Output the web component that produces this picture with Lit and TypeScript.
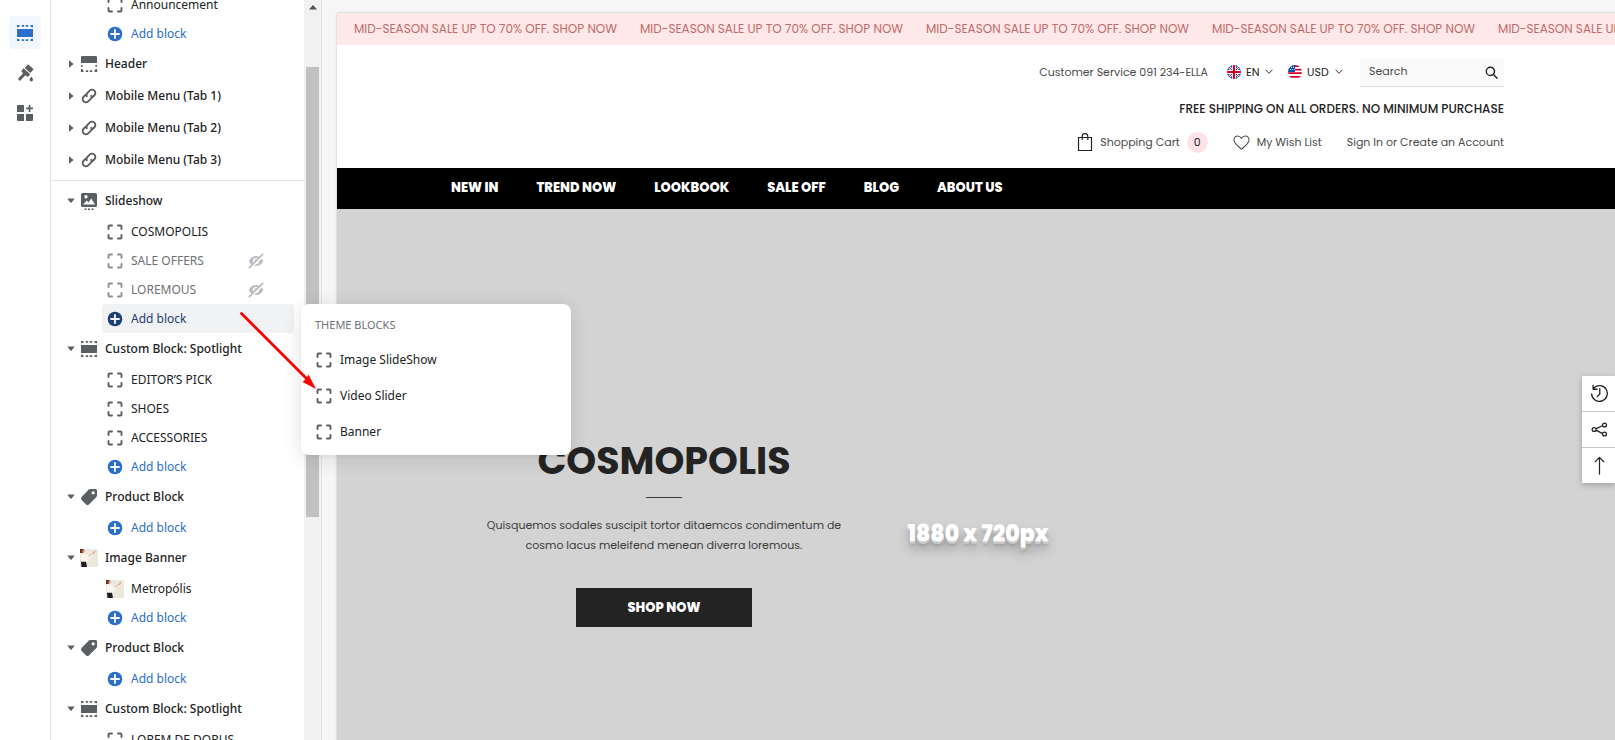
import { LitElement, html, css, svg, nothing, type TemplateResult } from "lit";
import { customElement } from "lit/decorators.js";
import { classMap } from "lit/directives/class-map.js";

const icon = (body: unknown, size = 20, box = "0 0 20 20") =>
  html`<svg class="icon" width=${size} height=${size} viewBox=${box} fill="currentColor" aria-hidden="true">${body}</svg>`;

const stroke = (d: string, size = 20, width = 1, box = "0 0 20 20") =>
  html`<svg class="icon" width=${size} height=${size} viewBox=${box} fill="none" stroke="currentColor" stroke-width=${width} stroke-linecap="round" stroke-linejoin="round" aria-hidden="true"><path d=${d} /></svg>`;

const icons: Record<string, () => TemplateResult> = {
  section: () => icon(svg`<path d="M2 6h16v8H2z"/><path d="M4.500 2.800H2.800V4.300M6.800 2.800h2.400M10.800 2.800h2.400M15.500 2.800h1.700V4.300M4.500 17.200H2.800V15.700M6.800 17.200h2.400M10.800 17.200h2.400M15.500 17.200h1.700V15.700" fill="none" stroke="currentColor" stroke-width="1.700"/>`),
  header: () => icon(svg`<path d="M3 2h14a1 1 0 0 1 1 1v6H2V3a1 1 0 0 1 1-1z"/><path d="M2.800 11v1.800M2.800 15v2.200h1.700M6.800 17.200h2.400M10.800 17.200h2.400M15.500 17.200h1.700V15M17.200 12.800V11" fill="none" stroke="currentColor" stroke-width="1.700"/>`),
  link: () => icon(svg`<g transform="rotate(-45 10 10)" fill="none" stroke="currentColor" stroke-width="1.900" stroke-linecap="round"><path d="M8.500 6.700H5.700a3.300 3.300 0 0 0 0 6.600h3.500a3.300 3.300 0 0 0 2.600-1.900"/><path d="M11.500 13.300h2.800a3.300 3.300 0 0 0 0-6.600h-3.500a3.300 3.300 0 0 0-2.600 1.900"/></g>`),
  slideshow: () => icon(svg`<path fill-rule="evenodd" d="M3.500 2h13A1.500 1.500 0 0 1 18 3.500v11a1.500 1.500 0 0 1-1.500 1.500h-13A1.500 1.500 0 0 1 2 14.500v-11A1.500 1.500 0 0 1 3.500 2zM4 13.500h12l-3.800-6-2.700 4-1.700-2zM7 4a1.700 1.700 0 1 0 .01 0z"/><path d="M5.500 17.500h2v1.500h-2zM9 17.500h2v1.500H9zM12.500 17.500h2v1.500h-2z"/>`),
  tag: () => icon(svg`<path fill-rule="evenodd" d="M11.200 2H16.500A1.500 1.500 0 0 1 18 3.500V8.600a2 2 0 0 1-.6 1.400l-7.500 7.400a2 2 0 0 1-2.800 0L2.600 12.900a2 2 0 0 1 0-2.800l7.200-7.500A2 2 0 0 1 11.200 2zM14.200 4.300a1.600 1.600 0 1 0 .01 0z"/>`),
  block: () => stroke("M3.500 7V4.500a1 1 0 0 1 1-1H7M13 3.500h2.500a1 1 0 0 1 1 1V7M16.500 13v2.500a1 1 0 0 1-1 1H13M7 16.500H4.500a1 1 0 0 1-1-1V13", 20, 1.900),
  plus: () => icon(svg`<circle cx="10" cy="10" r="7.300"/><path d="M10 6v8M6 10h8" stroke="#fff" stroke-width="1.800" stroke-linecap="round"/>`),
  hidden: () => icon(svg`<path d="M10 5c4 0 6.600 3 7.200 5-.6 2-3.200 5-7.200 5S3.400 12 2.800 10C3.400 8 6 5 10 5z"/><circle cx="10" cy="10" r="2.400" fill="none" stroke="#fff" stroke-width="1.400"/><path d="M4.300 17.600 17.600 4.300" stroke="#fff" stroke-width="1.800"/><path d="M3.400 16.600 16.600 3.400" stroke="currentColor" stroke-width="1.800" stroke-linecap="round"/>`),
  photo: () => html`<svg class="icon photo" viewBox="0 0 18 18" aria-hidden="true"><path fill="#ece8dd" d="M0 0h18v18H0z"/><path fill="#faf6ef" d="M1 5 4.500 4l3.500 3 5-3.500.8 1L9 9.500 7 13H1z"/><path fill="none" stroke="#d9a687" stroke-width=".9" d="M8.500 7.200 13.500 4"/><path fill="#6b2f20" d="M0 0h3.500l1 2-1 2H0z"/><path fill="#dda684" d="M2.200 1.200h1.900v2.600L2.800 4.600zM12.500 4.200l1.800-2.400 1.200.6-1.800 2.600z"/><path fill="#1d1d22" d="M1 12.800h5l1 5.200H1.500z"/></svg>`,
  brush: () => icon(svg`<g transform="rotate(42 10 10)"><path d="M6.500 1.500h7.500v5H6.500zM5.800 7.500h8.900v2.600a1.300 1.300 0 0 1-1.300 1.300h-1.700v6.600a1.500 1.500 0 0 1-3 0v-6.600H7.100a1.300 1.300 0 0 1-1.300-1.300z"/></g><path d="M16.300 13.800s1.700 1.900 1.700 3a1.700 1.700 0 0 1-3.400 0c0-1.100 1.700-3 1.700-3z"/>`),
  apps: () => icon(svg`<path d="M3 2h6v7H2V3a1 1 0 0 1 1-1zM2 11h7v7H3a1 1 0 0 1-1-1zM11 11h7v6a1 1 0 0 1-1 1h-6zM13.700 2h1.700v2.600H18v1.700h-2.600V9h-1.700V6.300H11V4.600h2.700z"/>`),
};

interface Block { label: string; kind?: string; off?: boolean; active?: boolean }
interface Section { label: string; icon: string; open?: boolean; blocks?: Block[] }

const add: Block = { label: "Add block", kind: "plus" };

const headerGroup: Section[] = [
  { label: "Header", icon: "header" },
  { label: "Mobile Menu (Tab 1)", icon: "link" },
  { label: "Mobile Menu (Tab 2)", icon: "link" },
  { label: "Mobile Menu (Tab 3)", icon: "link" },
];

const templateGroup: Section[] = [
  { label: "Slideshow", icon: "slideshow", open: true, blocks: [
    { label: "COSMOPOLIS" },
    { label: "SALE OFFERS", off: true },
    { label: "LOREMOUS", off: true },
    { ...add, active: true },
  ] },
  { label: "Custom Block: Spotlight", icon: "section", open: true, blocks: [
    { label: "EDITOR’S PICK" }, { label: "SHOES" }, { label: "ACCESSORIES" }, add,
  ] },
  { label: "Product Block", icon: "tag", open: true, blocks: [add] },
  { label: "Image Banner", icon: "photo", open: true, blocks: [{ label: "Metropólis", kind: "photo" }, add] },
  { label: "Product Block", icon: "tag", open: true, blocks: [add] },
  { label: "Custom Block: Spotlight", icon: "section", open: true, blocks: [{ label: "LOREM DE DORUS" }] },
];

@customElement("editor-sidebar")
export class EditorSidebar extends LitElement {
  static styles = css`
    :host { display: flex; min-height: 0; background: #fff; color: #202223; font-family: "Noto Sans", sans-serif; font-size: 12px; line-height: 20px; }
    button { font: inherit; color: inherit; border: 0; padding: 0; background: none; text-align: left; cursor: pointer; }
    ul { list-style: none; margin: 0; padding: 0; }
    .icon { display: block; flex: none; }
    .rail { box-sizing: border-box; width: 51px; border-right: 1px solid #e1e3e5; padding: 16px 9px; display: flex; flex-direction: column; gap: 7px; color: #5c5f62; }
    .tool { display: grid; place-items: center; height: 33px; border-radius: 4px; }
    .tool.on { background: #f2f7fe; color: #2c6ecb; }
    .list { width: 253px; overflow: hidden; }
    .group { padding: 4px 0; border-bottom: 1px solid #e1e3e5; }
    .group.scrolled { margin-top: -14px; }
    .section { display: flex; align-items: center; height: 32px; padding-left: 15px; color: #5c5f62; }
    .caret { width: 10px; height: 20px; margin-right: 3px; display: grid; place-items: center; }
    .name { margin-left: 6px; color: #202223; font-weight: 500; }
    .block { display: flex; align-items: center; gap: 6px; height: 29px; box-sizing: border-box; margin: 0 10px 0 51px; padding: 0 28px 0 3px; border-radius: 4px; color: #5c5f62; }
    .label { flex: 1; color: #202223; }
    .photo { width: 18px; height: 18px; margin: 0 1px; }
    .off { color: #8c9196; }
    .off .label { color: #6d7175; }
    .eye { color: #babec3; }
    .plus, .plus .label { color: #2c6ecb; }
    .active { background: #f1f2f3; }
    .active, .active .label { color: #1f3f77; }
    .scroll { width: 17px; background: #f1f1f1; border-right: 1px solid #e1e3e5; display: flex; flex-direction: column; align-items: center; }
    .up { height: 67px; padding-top: 5px; box-sizing: border-box; color: #505050; }
    .thumb { width: 13px; height: 450px; background: #c1c1c1; }
  `;

  private block(b: Block) {
    const kind = b.kind ?? "block";
    return html`<li class=${classMap({ block: true, plus: kind === "plus", off: !!b.off, active: !!b.active })}>
      ${icons[kind]()}
      <button class="label">${b.label}</button>
      ${b.off ? html`<button class="eye" aria-label="Show block">${icons.hidden()}</button>` : nothing}
    </li>`;
  }

  private section(s: Section) {
    return html`<li>
      <div class="section">
        <button class="caret" aria-label="Toggle section" aria-expanded=${s.open ? "true" : "false"}>
          <svg width="8" height="8" viewBox="0 0 8 8" fill="#5c5f62" aria-hidden="true"><path d=${s.open ? "M.3 1.500h7.400L4.600 5.500a.8.8 0 0 1-1.200 0z" : "M2 .3v7.400l4-3.100a.8.8 0 0 0 0-1.200z"} /></svg>
        </button>
        ${icons[s.icon]()}
        <button class="name">${s.label}</button>
      </div>
      ${s.blocks ? html`<ul>${s.blocks.map((b) => this.block(b))}</ul>` : nothing}
    </li>`;
  }

  render() {
    return html`
      <nav class="rail" aria-label="Editor">
        <button class="tool on" aria-label="Sections">${icons.section()}</button>
        <button class="tool" aria-label="Theme settings">${icons.brush()}</button>
        <button class="tool" aria-label="App embeds">${icons.apps()}</button>
      </nav>
      <div class="list">
        <ul class="group scrolled">
          ${this.block({ label: "Announcement" })}
          ${this.block(add)}
          ${headerGroup.map((s) => this.section(s))}
        </ul>
        <ul class="group">${templateGroup.map((s) => this.section(s))}</ul>
      </div>
      <div class="scroll" aria-hidden="true">
        <svg class="up" width="8" viewBox="0 0 8 5" preserveAspectRatio="xMidYMin" fill="currentColor"><path d="M4 0l4 4.500H0z" /></svg>
        <div class="thumb"></div>
      </div>`;
  }
}

@customElement("block-picker")
export class BlockPicker extends LitElement {
  static styles = css`
    :host { display: block; box-sizing: border-box; padding: 13px 16px 5px 13px; background: #fff; border-radius: 8px; box-shadow: 0 3px 20px rgba(23, 24, 24, 0.12), 0 1px 4px rgba(23, 24, 24, 0.04); font-family: "Noto Sans", sans-serif; font-size: 12px; line-height: 20px; color: #202223; }
    h2 { margin: 0 0 9px 1px; font-size: 11px; line-height: 16px; font-weight: 400; color: #6d7175; }
    button { display: flex; align-items: center; gap: 6px; width: 100%; height: 36px; border: 0; padding: 0; background: none; color: #5c5f62; font: inherit; cursor: pointer; }
    .label { color: #202223; }
  `;
  render() {
    return html`<h2>THEME BLOCKS</h2>
      ${["Image SlideShow", "Video Slider", "Banner"].map((t) => html`<button>${icons.block()}<span class="label">${t}</span></button>`)}`;
  }
}

const flagUk = html`<svg class="flag" viewBox="0 0 14 14" aria-hidden="true"><clipPath id="uk"><circle cx="7" cy="7" r="7"/></clipPath><g clip-path="url(#uk)"><path fill="#0052b4" d="M0 0h14v14H0z"/><path stroke="#fff" stroke-width="2.600" d="M0 0l14 14M14 0 0 14"/><path stroke="#d80027" stroke-width="1" d="M0 0l14 14M14 0 0 14"/><path stroke="#fff" stroke-width="3.800" d="M7 0v14M0 7h14"/><path stroke="#d80027" stroke-width="2" d="M7 0v14M0 7h14"/></g></svg>`;
const flagUs = html`<svg class="flag" viewBox="0 0 14 14" aria-hidden="true"><clipPath id="us"><circle cx="7" cy="7" r="7"/></clipPath><g clip-path="url(#us)"><path fill="#fff" d="M0 0h14v14H0z"/><path stroke="#d80027" stroke-width="1.800" d="M0 1h14M0 4.600h14M0 8.200h14M0 11.800h14"/><path fill="#0052b4" d="M0 0h7v7H0z"/><path stroke="#fff" stroke-width=".8" stroke-dasharray="1 1" d="M1 2.500h6M2 4.500h5M3 1h4"/></g></svg>`;
const chevron = stroke("M.8 2 4 5.300 7.200 2", 8, 0.9, "0 0 8 8");

@customElement("store-preview")
export class StorePreview extends LitElement {
  static styles = css`
    :host { display: block; background: #fff; color: #232323; font-family: Poppins, "Open Sans", sans-serif; font-size: 11px; line-height: 20px; box-shadow: 0 0 2px rgba(0, 0, 0, 0.25); overflow: hidden; }
    a { color: inherit; text-decoration: none; }
    .icon { display: block; flex: none; }
    .ticker { display: flex; gap: 23px; height: 31px; padding-bottom: 1px; align-items: center; padding-left: 17px; background: #ffe8e8; color: #bf6c6c; font-size: 12px; white-space: nowrap; }
    .head { display: flex; flex-direction: column; align-items: flex-end; padding: 14px 111px 0 114px; height: 109px; color: #4a4a4a; }
    .row { display: flex; align-items: center; }
    .top { gap: 15px; height: 28px; }
    .service { margin-right: 4px; }
    .service, .pick { padding-bottom: 2px; }
    .pick { display: flex; align-items: center; gap: 5px; color: #232323; }
    .flag { width: 14px; height: 14px; }
    select { appearance: none; border: 0; padding: 0; margin: 0; background: none; font: inherit; color: inherit; width: 14px; }
    .usd { width: 23px; }
    .search { box-sizing: border-box; display: flex; align-items: center; width: 144px; height: 28px; margin-left: 2px; padding: 0 6px 0 9px; background: #fafafa; border-bottom: 1px solid #dadada; }
    .search input { flex: 1; min-width: 0; border: 0; padding: 0 0 3px; background: none; font: inherit; color: #4a4a4a; outline: 0; }
    .search input::placeholder { color: #4a4a4a; opacity: 1; }
    .search button { border: 0; padding: 0; background: none; color: #232323; display: grid; place-items: center; }
    .promo { margin: 12px 0 11px; font-size: 12px; line-height: 20px; font-weight: 500; color: #232323; }
    .account { gap: 25px; height: 24px; }
    .with-icon { display: flex; align-items: center; gap: 7px; }
    .badge { width: 21px; height: 21px; line-height: 21px; border-radius: 50%; background: #ffe1e6; text-align: center; color: #232323; }
    .menu { display: flex; gap: 38px; align-items: center; height: 39px; padding: 0 111px 2px 114px; background: #000; color: #fff; font-size: 13px; font-weight: 800; }
    .hero { display: grid; align-items: center; height: 650px; background: #d3d3d3; }
    .hero > * { grid-area: 1 / 1; }
    .size { justify-self: center; padding-left: 4px; font-size: 22px; line-height: 32px; font-weight: 800; color: #fff; text-shadow: 0 1px 0 #ddd, 0 2px 0 #ccc, 0 3px 0 #c4c4c4, 0 5px 3px rgba(0, 0, 0, 0.1), 0 8px 12px rgba(0, 0, 0, 0.3); }
    .copy { width: 380px; margin-left: 137px; text-align: center; display: flex; flex-direction: column; align-items: center; }
    h1 { margin: 0 0 17px; font-size: 38px; line-height: 38px; font-weight: 700; }
    .rule { width: 36px; height: 1px; background: #3c3c3c; }
    p { margin: 17px 0 33px; color: #3c3c3c; }
    .shop { width: 176px; line-height: 39px; background: #232323; color: #fff; font-size: 13px; font-weight: 800; }
  `;
  render() {
    return html`
      <div class="ticker">${Array.from({ length: 5 }, () => html`<a href="#">MID-SEASON SALE UP TO 70% OFF. SHOP NOW</a>`)}</div>
      <header class="head">
        <div class="row top">
          <span class="service">Customer Service 091 234-ELLA</span>
          <label class="pick">${flagUk}<select aria-label="Language"><option>EN</option></select>${chevron}</label>
          <label class="pick">${flagUs}<select class="usd" aria-label="Currency"><option>USD</option></select>${chevron}</label>
          <form class="search" role="search">
            <input type="text" placeholder="Search" aria-label="Search" />
            <button type="button" aria-label="Submit search">${stroke("M7.800 7.800 11.200 11.200M8.800 5a3.800 3.800 0 1 1-7.600 0 3.800 3.800 0 0 1 7.600 0z", 13, 1.3, "0 0 12 12")}</button>
          </form>
        </div>
        <div class="promo">FREE SHIPPING ON ALL ORDERS. NO MINIMUM PURCHASE</div>
        <div class="row account">
          <a class="with-icon" href="#"><svg class="icon" width="16" height="20" viewBox="0 0 16 20" fill="none" stroke="#232323" stroke-width="1.200" aria-hidden="true"><path d="M1.500 5.500h13v13h-13zM5.200 8V4.500a2.800 2.800 0 0 1 5.600 0V8"/></svg>Shopping Cart<span class="badge">0</span></a>
          <a class="with-icon" href="#">${stroke("M9 15.500C6 13 1 9.800 1 5.700A4 4 0 0 1 5 1.600c1.800 0 3.200 1.100 4 2.600.8-1.500 2.200-2.600 4-2.600a4 4 0 0 1 4 4.100c0 4.100-5 7.300-8 9.800z", 17, 1.1, "0 0 18 17")}My Wish List</a>
          <a href="#">Sign In or Create an Account</a>
        </div>
      </header>
      <nav class="menu">${["NEW IN", "TREND NOW", "LOOKBOOK", "SALE OFF", "BLOG", "ABOUT US"].map((t) => html`<a href="#">${t}</a>`)}</nav>
      <section class="hero">
        <div class="size">1880 x 720px</div>
        <div class="copy">
          <h1>COSMOPOLIS</h1>
          <div class="rule"></div>
          <p>Quisquemos sodales suscipit tortor ditaemcos condimentum de cosmo lacus meleifend menean diverra loremous.</p>
          <a class="shop" href="#">SHOP NOW</a>
        </div>
      </section>`;
  }
}

@customElement("app-root")
export class AppRoot extends LitElement {
  static styles = css`
    :host { display: grid; grid-template-columns: auto minmax(0, 1fr); height: 100vh; overflow: hidden; position: relative; background: #f6f6f7; }
    .stage { padding: 13px 0 0 15px; min-height: 0; overflow: hidden; }
    .picker { position: absolute; left: 301px; top: 304px; width: 270px; }
    .arrow { position: absolute; left: 236px; top: 308px; }
    .float { position: absolute; right: 0; top: 376px; display: grid; gap: 1px; width: 33px; background: #c4c4c4; box-shadow: 0 2px 6px rgba(0, 0, 0, 0.25); }
    .float button { border: 0; padding: 0 0 0 2px; height: 35px; display: grid; place-items: center; background: #fff; color: #232323; }
  `;
  render() {
    return html`
      <editor-sidebar></editor-sidebar>
      <main class="stage"><store-preview></store-preview></main>
      <div class="float">
        <button aria-label="Recently viewed">${stroke("M4.300 3.900A8.300 8.300 0 1 1 1.700 10.500M3.300 1.500v4h4M10.300 5v5.500l-2.800 2.800", 19, 1.400)}</button>
        <button aria-label="Share">${stroke("M5.700 9.200l7.600-3.600M5.700 10.800l7.600 3.800M6 10a2.300 2.300 0 1 1-4.600 0A2.300 2.300 0 0 1 6 10zM18.200 4.700a2.300 2.300 0 1 1-4.600 0 2.300 2.300 0 0 1 4.600 0zM18.200 15.300a2.300 2.300 0 1 1-4.600 0 2.300 2.300 0 0 1 4.600 0z", 17, 1.500)}</button>
        <button aria-label="Back to top">${stroke("M10 19V1.500M5.500 6 10 1.500 14.500 6", 19, 1.300)}</button>
      </div>
      <block-picker class="picker"></block-picker>
      <svg class="arrow" width="86" height="86" viewBox="0 0 86 86" aria-hidden="true"><path d="M5.500 5.500 72 72" stroke="#f00" stroke-width="2.800" stroke-linecap="round"/><path fill="#f00" d="M80 81 66.500 74l3.500-3 2.500-4.500z"/></svg>`;
  }
}
